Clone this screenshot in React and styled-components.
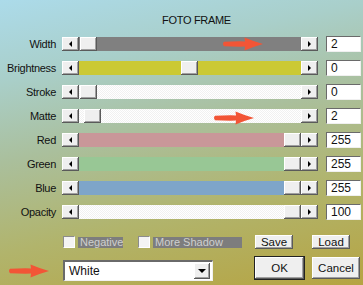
import React from "react";
import styled, { createGlobalStyle } from "styled-components";

const GlobalStyle = createGlobalStyle`
  html, body { margin: 0; padding: 0; }
  body { font-family: "Liberation Sans", Arial, sans-serif; }
`;

const Dialog = styled.div`
  position: relative;
  width: 363px;
  height: 285px;
  overflow: hidden;
  background: linear-gradient(168deg, #acdbea 0%, #a9cfca 22%, #aabf9c 45%, #b1b46c 70%, #b6a442 100%);
  font-family: "Liberation Sans", Arial, sans-serif;
  font-size: 11px;
  color: #111;
`;

const Title = styled.div`
  padding: 14px 0 0 162px;
  height: 18px;
  line-height: 13px;
  letter-spacing: -0.3px;
`;

const Rows = styled.div`
  display: flex;
  flex-direction: column;
`;

const Row = styled.div`
  display: flex;
  align-items: center;
  height: 24px;
`;

const Label = styled.div`
  width: 56px;
  margin-right: 6px;
  text-align: right;
  letter-spacing: -0.3px;
  white-space: nowrap;
`;

const Bar = styled.div`
  display: flex;
  width: 256px;
  height: 14px;
`;

const raised = `
  background: #efefef;
  box-shadow: inset -1px -1px 0 #5a5a5a, inset 1px 1px 0 #ffffff, inset -2px -2px 0 #a0a0a0;
`;

const ArrowBtn = styled.div`
  ${raised}
  width: 17px;
  height: 14px;
  flex: none;
  display: flex;
  align-items: center;
  justify-content: center;
  &::after {
    content: "";
    width: 0;
    height: 0;
    border-top: 3px solid transparent;
    border-bottom: 3px solid transparent;
    ${p => (p.$dir === "left" ? "border-right: 3px solid #000;" : "border-left: 3px solid #000;")}
  }
`;

const dither = "repeating-conic-gradient(#ffffff 0 25%, #f1f1f1 0 50%) 0 0 / 2px 2px";

const Track = styled.div`
  position: relative;
  flex: 1;
  background: ${p => p.$fill || dither};
`;

const Thumb = styled.div`
  ${raised}
  position: absolute;
  top: 0;
  width: 17px;
  height: 14px;
`;

const Value = styled.div`
  box-sizing: border-box;
  width: 35px;
  height: 16px;
  margin-left: 8px;
  padding: 1px 0 0 4px;
  background: #fff;
  border-top: 1px solid #6a6a6a;
  border-left: 1px solid #6a6a6a;
  border-right: 1px solid #f0f0f0;
  border-bottom: 1px solid #f0f0f0;
  font-size: 12px;
  line-height: 13px;
`;

const Footer = styled.div`
  display: grid;
  grid-template-columns: 192px 57px 49px;
  grid-template-rows: 14px 24px;
  row-gap: 8px;
  padding: 11px 0 0 63px;
`;

const Options = styled.div`
  display: flex;
  align-items: center;
  gap: 15px;
`;

const Check = styled.div`
  display: flex;
  align-items: center;
  gap: 3px;
`;

const Box = styled.div`
  width: 12px;
  height: 12px;
  box-sizing: border-box;
  background: #f4f4f4;
  border-top: 1px solid #8c8c8c;
  border-left: 1px solid #8c8c8c;
  border-right: 1px solid #ffffff;
  border-bottom: 1px solid #ffffff;
`;

const CheckText = styled.div`
  width: ${p => p.$w}px;
  height: 11px;
  padding-left: 2px;
  box-sizing: border-box;
  background: #7d7d7d;
  color: #cfcfcf;
  line-height: 11px;
  font-size: 11px;
`;

const Button = styled.div`
  ${raised}
  box-sizing: border-box;
  width: ${p => p.$w}px;
  height: ${p => p.$h}px;
  display: flex;
  align-items: center;
  justify-content: center;
  font-size: 11.5px;
  ${p => p.$default && "outline: 1px solid #222;"}
`;

const Select = styled.div`
  box-sizing: border-box;
  width: 150px;
  height: 21px;
  margin-top: 3px;
  display: flex;
  align-items: center;
  justify-content: space-between;
  padding: 0 2px 0 4px;
  background: #fff;
  border-top: 2px solid #6a6a6a;
  border-left: 2px solid #6a6a6a;
  border-right: 1px solid #f0f0f0;
  border-bottom: 1px solid #f0f0f0;
  font-size: 12px;
`;

const DropBtn = styled.div`
  ${raised}
  width: 16px;
  height: 16px;
  display: flex;
  align-items: center;
  justify-content: center;
  &::after {
    content: "";
    border-left: 4px solid transparent;
    border-right: 4px solid transparent;
    border-top: 4px solid #000;
  }
`;

const Pointer = styled.svg`
  position: absolute;
  left: ${p => p.$x}px;
  top: ${p => p.$y}px;
`;

const RedArrow = ({ x, y }) => (
  <Pointer $x={x} $y={y} width="41" height="14" viewBox="0 0 41 14">
    <path
      d="M2 4.8 Q12 4.2 23 4.4 L22.5 0.5 Q32 4.5 41 7 Q32 9.5 22.5 13.5 L23 9.6 Q12 9.8 2 9.2 Q0 7 2 4.8 Z"
      fill="#f25536"
    />
  </Pointer>
);

const sliders = [
  { label: "Width", pos: 1, fill: "#808080", value: "2" },
  { label: "Brightness", pos: 102, fill: "#cbc934", value: "0" },
  { label: "Stroke", pos: 1, value: "0" },
  { label: "Matte", pos: 5, value: "2" },
  { label: "Red", pos: 205, fill: "#c99799", value: "255" },
  { label: "Green", pos: 205, fill: "#98c795", value: "255" },
  { label: "Blue", pos: 205, fill: "#7ea5c9", value: "255" },
  { label: "Opacity", pos: 205, value: "100" },
];

export default function App() {
  return (
    <>
      <GlobalStyle />
      <Dialog>
        <Title>FOTO FRAME</Title>
        <Rows>
          {sliders.map(s => (
            <Row key={s.label}>
              <Label>{s.label}</Label>
              <Bar>
                <ArrowBtn $dir="left" />
                <Track $fill={s.fill}>
                  <Thumb style={{ left: s.pos }} />
                </Track>
                <ArrowBtn $dir="right" />
              </Bar>
              <Value>{s.value}</Value>
            </Row>
          ))}
        </Rows>
        <Footer>
          <Options>
            <Check>
              <Box />
              <CheckText $w={45}>Negative</CheckText>
            </Check>
            <Check>
              <Box />
              <CheckText $w={89}>More Shadow</CheckText>
            </Check>
          </Options>
          <Button $w={38} $h={14}>Save</Button>
          <Button $w={38} $h={14}>Load</Button>
          <Select>
            White
            <DropBtn />
          </Select>
          <Button $w={49} $h={22} $default>OK</Button>
          <Button $w={48} $h={22}>Cancel</Button>
        </Footer>
        <RedArrow x={222} y={37} />
        <RedArrow x={213} y={111} />
        <RedArrow x={8} y={264} />
      </Dialog>
    </>
  );
}
